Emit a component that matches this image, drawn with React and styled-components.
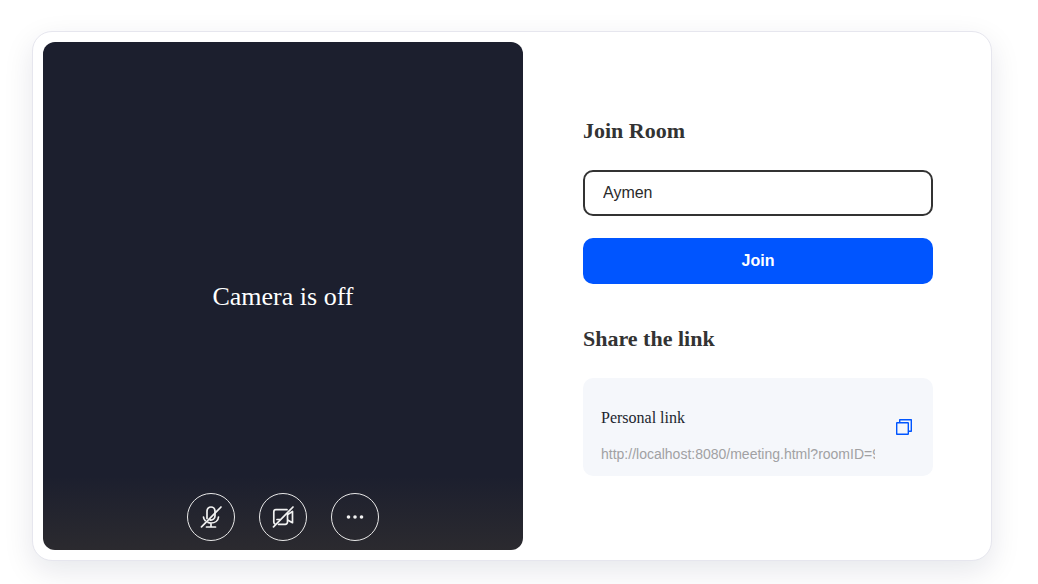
import React, { useState } from "react";
import styled, { createGlobalStyle } from "styled-components";

const serif = '"Liberation Serif", "Times New Roman", serif';
const sans = '"Liberation Sans", Arial, sans-serif';

const GlobalStyle = createGlobalStyle`
  *, *::before, *::after { box-sizing: border-box; }
  body { margin: 0; background: #fff; color: #1c1f2e; font-family: ${serif}; }
  button, input { margin: 0; }
`;

const Page = styled.main`
  padding: 31px 46px 23px 32px;
`;

const Card = styled.section`
  display: grid;
  grid-template-columns: minmax(0, 480fr) minmax(0, 458fr);
  padding: 10px;
  border: 1px solid #e6e6ee;
  border-radius: 20px;
  background: #fff;
  box-shadow: 0 10px 30px rgba(12, 24, 63, 0.1);
`;

const Preview = styled.div`
  display: grid;
  grid-template-rows: 1fr auto 1fr;
  min-height: 508px;
  padding-top: 2px;
  border-radius: 12px;
  background: linear-gradient(to top, #2b2a2f 0, rgba(43, 42, 47, 0) 74px), #1c1f2e;
`;

const CameraStatus = styled.p`
  grid-row: 2;
  margin: 0;
  color: #fff;
  font-size: 26px;
  line-height: 30px;
  text-align: center;
`;

const Controls = styled.div`
  grid-row: 3;
  align-self: end;
  display: flex;
  justify-content: center;
  gap: 24px;
  padding-bottom: 9px;
`;

const RoundButton = styled.button`
  display: grid;
  place-items: center;
  width: 48px;
  height: 48px;
  padding: 0;
  border: 1px solid #e8e8e8;
  border-radius: 50%;
  background: transparent;
  color: #f2f2f2;
  cursor: pointer;
`;

const Panel = styled.div`
  display: flex;
  flex-direction: column;
  justify-content: center;
  gap: 42px;
  padding: 2px 48px 0 60px;
`;

const JoinForm = styled.form`
  display: flex;
  flex-direction: column;
`;

const Heading = styled.h2`
  margin: 0 0 26px;
  color: #333;
  font-size: 22px;
  line-height: 26px;
`;

const NameInput = styled.input`
  width: 100%;
  height: 46px;
  padding: 0 18px;
  border: 2px solid #333;
  border-radius: 10px;
  outline: none;
  background: #fff;
  color: #2a2a2a;
  font: 16px ${sans};
`;

const JoinButton = styled.button`
  height: 46px;
  margin-top: 22px;
  border: 0;
  border-radius: 10px;
  background: #0055ff;
  color: #fff;
  font: bold 16px ${sans};
  cursor: pointer;
`;

const LinkBox = styled.div`
  display: flex;
  align-items: center;
  gap: 20px;
  padding: 0 20px 0 18px;
  border-radius: 10px;
  background: #f5f7fb;
`;

const LinkField = styled.div`
  display: flex;
  flex: 1;
  flex-direction: column;
  gap: 18px;
  min-width: 0;
  padding: 31px 0 13px;
`;

const LinkLabel = styled.label`
  color: #1c1f2e;
  font-size: 16px;
  line-height: 18px;
`;

const LinkInput = styled.input`
  width: 100%;
  height: 18px;
  padding: 0;
  border: 0;
  outline: none;
  background: transparent;
  color: #a1a1a3;
  font: 14px ${sans};
`;

const CopyButton = styled.button`
  display: flex;
  padding: 0;
  border: 0;
  background: transparent;
  color: #0055ff;
  cursor: pointer;
`;

const MicOffIcon = () => (
  <svg width="24" height="24" viewBox="0 0 24 24" fill="none" stroke="currentColor" strokeWidth="1.7" strokeLinecap="round" aria-hidden="true">
    <path d="M8 13.5V6a4 4 0 0 1 8 0v5a4 4 0 0 1-5 3.9" />
    <path d="M4.500 12c.1 1.500.7 2.800 1.700 3.700M19.500 12c-.3 3.800-3.500 6-7.500 6-1 0-2-.2-3-.6M12 18v4M7.500 22h9" />
    <path d="M2.500 21.900 22 2" />
  </svg>
);

const CameraOffIcon = () => (
  <svg width="24" height="24" viewBox="0 0 24 24" fill="none" stroke="currentColor" strokeWidth="1.7" strokeLinejoin="round" strokeLinecap="round" aria-hidden="true">
    <path d="M16 4.700H5a2.200 2.200 0 0 0-2.200 2.200v10c0 .9.300 1.500 1 2M7.500 19.300h6.800a2.200 2.200 0 0 0 2.200-2.200V8.500M6 14.500h3" />
    <path d="M17 9.300 21.500 6.500v11.200L17 15.200" />
    <path d="M2.500 21.900 22 2" />
  </svg>
);

const MoreIcon = () => (
  <svg width="24" height="24" viewBox="0 0 24 24" fill="currentColor" aria-hidden="true">
    <circle cx="5.5" cy="12" r="1.8" />
    <circle cx="12" cy="12" r="1.8" />
    <circle cx="18.5" cy="12" r="1.8" />
  </svg>
);

const CopyIcon = () => (
  <svg width="18" height="18" viewBox="0 0 18 18" fill="none" stroke="currentColor" strokeWidth="1.4" strokeLinejoin="round" aria-hidden="true">
    <rect x="1.7" y="4.7" width="11.6" height="11.6" rx=".4" />
    <path d="M4.700 4.500V1.700h11.600v11.600h-2.800" />
  </svg>
);

export default function App() {
  const [name, setName] = useState("Aymen");
  const link = "http://localhost:8080/meeting.html?roomID=9482";

  return (
    <>
      <GlobalStyle />
      <Page>
        <Card>
          <Preview>
            <CameraStatus>Camera is off</CameraStatus>
            <Controls>
              <RoundButton type="button" aria-label="Turn on microphone"><MicOffIcon /></RoundButton>
              <RoundButton type="button" aria-label="Turn on camera"><CameraOffIcon /></RoundButton>
              <RoundButton type="button" aria-label="More options"><MoreIcon /></RoundButton>
            </Controls>
          </Preview>
          <Panel>
            <JoinForm onSubmit={(event) => event.preventDefault()}>
              <Heading><label htmlFor="user-name">Join Room</label></Heading>
              <NameInput id="user-name" value={name} onChange={(event) => setName(event.target.value)} />
              <JoinButton type="submit">Join</JoinButton>
            </JoinForm>
            <section>
              <Heading>Share the link</Heading>
              <LinkBox>
                <LinkField>
                  <LinkLabel htmlFor="personal-link">Personal link</LinkLabel>
                  <LinkInput id="personal-link" readOnly value={link} />
                </LinkField>
                <CopyButton type="button" aria-label="Copy link"><CopyIcon /></CopyButton>
              </LinkBox>
            </section>
          </Panel>
        </Card>
      </Page>
    </>
  );
}
